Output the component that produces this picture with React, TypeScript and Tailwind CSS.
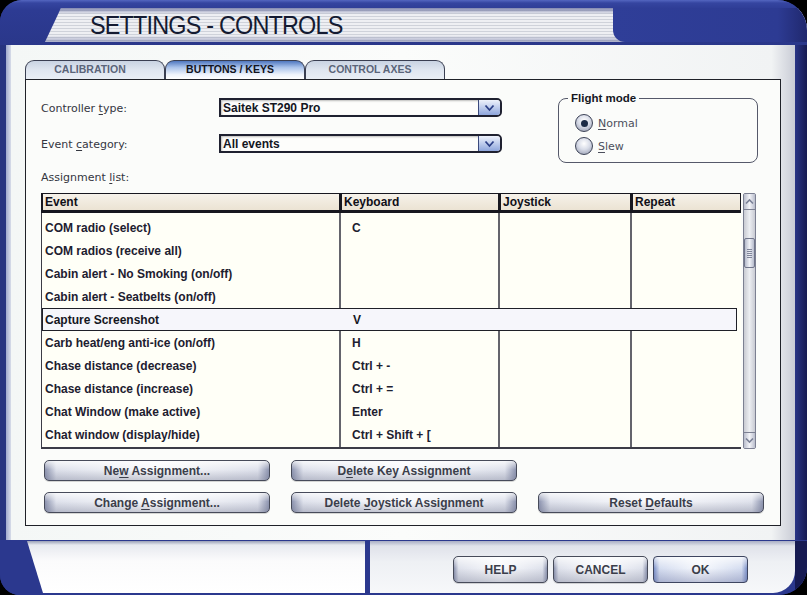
import React from "react";

const rows: [string, string, boolean?][] = [
  ["COM radio (select)", "C"],
  ["COM radios (receive all)", ""],
  ["Cabin alert - No Smoking (on/off)", ""],
  ["Cabin alert - Seatbelts (on/off)", ""],
  ["Capture Screenshot", "V", true],
  ["Carb heat/eng anti-ice (on/off)", "H"],
  ["Chase distance (decrease)", "Ctrl + -"],
  ["Chase distance (increase)", "Ctrl + ="],
  ["Chat Window (make active)", "Enter"],
  ["Chat window (display/hide)", "Ctrl + Shift + ["],
];

const btn =
  "flex items-center justify-center rounded-[5px] border border-[#474b5a] bg-[linear-gradient(180deg,rgba(255,255,255,0.75)_0%,rgba(255,255,255,0)_45%,rgba(110,115,140,0.35)_100%),linear-gradient(90deg,#8e95b0_0%,#dfe2ec_5%,#fafbfd_50%,#dfe2ec_95%,#8e95b0_100%)] font-['Liberation_Sans',Arial,sans-serif] font-bold text-[12px] text-[#3b3e4a] shadow-[0_1px_0_rgba(0,0,0,0.15)]";

function U({ c }: { c: string }) {
  return <span className="underline underline-offset-2">{c}</span>;
}

function Chevron({ up }: { up?: boolean }) {
  return (
    <svg width="9" height="7" viewBox="0 0 9 7">
      <path
        d={up ? "M1 5.5 L4.5 2 L8 5.5" : "M1 1.5 L4.5 5 L8 1.5"}
        fill="none"
        stroke="#7a8096"
        strokeWidth="1.6"
      />
    </svg>
  );
}

function Select({ value }: { value: string }) {
  return (
    <div className="w-[283px] h-[19px] flex border-2 border-[#1f2130] rounded-r-[5px] bg-[#fdfdfb] shadow-[inset_1px_1px_2px_rgba(0,0,0,0.25)]">
      <div className="flex-1 flex items-center pl-[2px] font-['Liberation_Sans',Arial,sans-serif] font-bold text-[12px] text-[#14161f]">
        {value}
      </div>
      <div className="w-[22px] flex items-center justify-center rounded-r-[3px] border-l border-[#3b4a7c] bg-[linear-gradient(180deg,#eef2fb_0%,#c3d0ee_45%,#8ea6dc_100%)]">
        <svg width="11" height="8" viewBox="0 0 11 8">
          <path d="M1.5 1.5 L5.5 6 L9.5 1.5" fill="none" stroke="#2b3f86" strokeWidth="1.8" />
        </svg>
      </div>
    </div>
  );
}

function Radio({ on, label }: { on?: boolean; label: React.ReactNode }) {
  return (
    <div className="flex items-center h-[18px]">
      <div className="w-[18px] h-[18px] rounded-full border border-[#3c4256] bg-[radial-gradient(circle_at_50%_35%,#ffffff_0%,#d8dce8_45%,#8d93a8_100%)] flex items-center justify-center">
        {on && <div className="w-[7px] h-[7px] rounded-full bg-[#1b2a45]" />}
      </div>
      <span className="ml-[5px] pt-[2px] font-['DejaVu_Sans',Verdana,sans-serif] text-[11px] text-[#4c4f5c]">
        {label}
      </span>
    </div>
  );
}

function HeaderCell({ w, label }: { w: string; label: string }) {
  return (
    <div
      className={`${w} h-[20px] flex items-center pl-[2px] border-t border-b-[3px] border-l-2 border-r border-[#17171f] bg-[linear-gradient(180deg,#f6f2ea_0%,#ebe3d3_100%)] font-['Liberation_Sans',Arial,sans-serif] font-bold text-[12px] text-[#101018]`}
    >
      {label}
    </div>
  );
}

function BodyCells({ h, ev, kb }: { h: string; ev?: string; kb?: string }) {
  return (
    <div className={`${h} flex font-['Liberation_Sans',Arial,sans-serif] font-bold text-[12px] text-[#1d2030]`}>
      <div className="w-[299px] border-r-2 border-[#64646c] flex items-center pl-[3px]">{ev}</div>
      <div className="w-[159px] border-r-2 border-[#64646c] flex items-center pl-[11px]">{kb}</div>
      <div className="w-[132px] border-r-2 border-[#64646c]" />
      <div className="flex-1" />
    </div>
  );
}

function Tab({ label, active }: { label: string; active?: boolean }) {
  return (
    <div
      className={`w-[140px] h-[19px] flex items-center justify-center pr-[10px] rounded-t-[9px] border border-b-0 border-[#3a3f52] font-['Liberation_Sans',Arial,sans-serif] font-bold text-[10.5px] ${
        active
          ? "bg-[linear-gradient(180deg,#4f77bf_0%,#a9c2ea_35%,#eef3fb_75%,#ffffff_100%)] text-[#111320]"
          : "bg-[linear-gradient(180deg,#c9d3e2_0%,#dfe6f0_50%,#e9eef5_100%)] text-[#5a6479]"
      }`}
    >
      {label}
    </div>
  );
}

const label = "pt-[3px] font-['DejaVu_Sans',Verdana,sans-serif] text-[11px] text-[#34363f]";

export default function App() {
  return (
    <div className="w-[807px] h-[595px] bg-black overflow-hidden">
      <div className="w-full h-full flex flex-col overflow-hidden rounded-tl-[22px] rounded-tr-[30px] rounded-bl-[20px] rounded-br-[28px] bg-[#2d3b93]">
        {/* header */}
        <div className="h-[45px] flex pt-[8px] pb-[3px] bg-[linear-gradient(180deg,#5466c0_0px,#3545a0_3px,#2d3b93_10px,#2a378a_100%)]">
          <div className="w-[45px]" />
          <div className="flex-1 flex [clip-path:polygon(16px_0,100%_0,100%_100%,0_100%)] bg-[linear-gradient(180deg,rgba(40,50,120,0.55)_0px,rgba(40,50,120,0)_6px,rgba(255,255,255,0)_80%,rgba(40,50,120,0.35)_100%),repeating-linear-gradient(180deg,#eeeff3_0px,#eeeff3_2px,#cfd2da_2px,#cfd2da_3px)]">
            <div className="w-[568px] flex items-center pl-[45px]">
              <span className="font-['Liberation_Sans',Arial,sans-serif] text-[26px] leading-none text-[#141a31] tracking-[-0.9px] scale-x-90 origin-left whitespace-nowrap">
                SETTINGS - CONTROLS
              </span>
            </div>
            <div className="flex-1 rounded-bl-[12px] bg-[linear-gradient(90deg,#2f3e98_0%,#2d3b93_85%,#20286e_100%)]" />
          </div>
        </div>

        {/* middle */}
        <div className="flex-1 flex">
          <div className="w-[6px] bg-[#27347f]" />
          <div className="w-[5px] bg-[linear-gradient(90deg,#9fa9cc,#d8dde9)]" />
          <div className="w-[784px] flex flex-col pt-[15px] pl-[14px] pr-[14px] pb-[14px] bg-[linear-gradient(90deg,#f4f7f6_0%,#fbfcfb_50%,#f1f3f4_97%,#c9ccd6_100%)]">
            <div className="flex h-[19px]">
              <Tab label="CALIBRATION" />
              <Tab label="BUTTONS / KEYS" active />
              <Tab label="CONTROL AXES" />
            </div>
            <div className="flex-1 border border-[#1f2128] bg-[#fbfcfa] flex flex-col pl-[15px]">
              {/* top controls */}
              <div className="flex items-start h-[73px]">
                <div className="flex flex-col pt-[18px]">
                  <div className="flex items-center h-[19px]">
                    <span className={`w-[178px] ${label}`}>
                      Controller <U c="t" />ype:
                    </span>
                    <Select value="Saitek ST290 Pro" />
                  </div>
                  <div className="flex items-center h-[19px] mt-[17px]">
                    <span className={`w-[178px] ${label}`}>
                      Event <U c="c" />ategory:
                    </span>
                    <Select value="All events" />
                  </div>
                </div>
                <fieldset className="shrink-0 ml-[56px] mt-[12px] w-[200px] h-[71px] border border-[#55596a] rounded-[8px]">
                  <legend className="ml-[9px] px-[3px] font-['Liberation_Sans',Arial,sans-serif] font-bold text-[11.5px] text-[#15171f] leading-[13px]">
                    Flight mode
                  </legend>
                  <div className="flex flex-col pl-[16px] pt-[9px] gap-[5px]">
                    <Radio on label={<><U c="N" />ormal</>} />
                    <Radio label={<><U c="S" />lew</>} />
                  </div>
                </fieldset>
              </div>

              <div className="mt-[16px] h-[15px] flex items-center">
                <span className={label}>
                  Assignment <U c="l" />ist:
                </span>
              </div>

              {/* table */}
              <div className="mt-[9px] flex h-[256px]">
                <div className="w-[700px] flex flex-col">
                  <div className="flex">
                    <HeaderCell w="w-[299px]" label="Event" />
                    <HeaderCell w="w-[159px]" label="Keyboard" />
                    <HeaderCell w="w-[132px]" label="Joystick" />
                    <HeaderCell w="w-[110px]" label="Repeat" />
                  </div>
                  <div className="flex-1 flex flex-col border-l border-b-2 border-[#3c3c46] bg-[#fffff7]">
                    <BodyCells h="h-[3px]" />
                    {rows.map(([ev, kb, sel]) =>
                      sel ? (
                        <div
                          key={ev}
                          className="h-[23px] mr-[4px] flex items-center border border-[#1f2028] bg-[#f6f6fb] font-['Liberation_Sans',Arial,sans-serif] font-bold text-[12px] text-[#15171f]"
                        >
                          <span className="w-[299px] pl-[2px]">{ev}</span>
                          <span className="pl-[11px]">{kb}</span>
                        </div>
                      ) : (
                        <BodyCells key={ev} h="h-[23px]" ev={ev} kb={kb} />
                      )
                    )}
                    <BodyCells h="flex-1" />
                  </div>
                </div>
                {/* scrollbar */}
                <div className="ml-[2px] w-[13px] flex flex-col border border-[#7c8092] rounded-[2px] bg-[linear-gradient(90deg,#c9cbd3_0%,#eceef2_50%,#c9cbd3_100%)]">
                  <div className="h-[16px] flex items-center justify-center border-b border-[#7c8092] bg-[linear-gradient(90deg,#b9bdcc,#f3f4f8_50%,#b9bdcc)]">
                    <Chevron up />
                  </div>
                  <div className="flex-1">
                    <div className="mt-[28px] h-[30px] border border-[#70758a] rounded-[2px] bg-[linear-gradient(90deg,#b6bbcc,#f0f2f7_50%,#b6bbcc)] flex flex-col items-center justify-center gap-[1px]">
                      <div className="w-[5px] h-px bg-[#80859a]" />
                      <div className="w-[5px] h-px bg-[#80859a]" />
                      <div className="w-[5px] h-px bg-[#80859a]" />
                      <div className="w-[5px] h-px bg-[#80859a]" />
                      <div className="w-[5px] h-px bg-[#80859a]" />
                    </div>
                  </div>
                  <div className="h-[16px] flex items-center justify-center border-t border-[#7c8092] bg-[linear-gradient(90deg,#b9bdcc,#f3f4f8_50%,#b9bdcc)]">
                    <Chevron />
                  </div>
                </div>
              </div>

              {/* buttons */}
              <div className="ml-[3px] mt-[11px] grid grid-cols-[226px_226px_226px] gap-x-[21px] gap-y-[11px]">
                <div className={`${btn} h-[21px]`}>
                  <span>
                    Ne<U c="w" /> Assignment...
                  </span>
                </div>
                <div className={`${btn} h-[21px]`}>
                  <span>
                    D<U c="e" />lete Key Assignment
                  </span>
                </div>
                <div />
                <div className={`${btn} h-[21px]`}>
                  <span>
                    Change <U c="A" />ssignment...
                  </span>
                </div>
                <div className={`${btn} h-[21px]`}>
                  <span>
                    Delete <U c="J" />oystick Assignment
                  </span>
                </div>
                <div className={`${btn} h-[21px]`}>
                  <span>
                    Reset <U c="D" />efaults
                  </span>
                </div>
              </div>
            </div>
          </div>
          <div className="w-[12px] bg-[linear-gradient(90deg,#2a3586,#161a52)]" />
        </div>

        {/* bottom */}
        <div className="h-[55px] flex pt-[1px] pb-[2px] bg-[#2b388e]">
          <div className="w-[27px]" />
          <div className="w-[338px] [clip-path:polygon(0_0,100%_0,100%_100%,16px_100%)] bg-[linear-gradient(180deg,#9aa0b6_0px,#e7e9ef_4px,#fbfbfc_20px,#ffffff_100%)]" />
          <div className="w-[5px]" />
          <div className="w-[425px] rounded-br-[22px] flex items-start pt-[15px] pl-[83px] gap-[5px] bg-[linear-gradient(180deg,#a9aec4_0px,#e0e2ea_5px,#eef0f4_40%,#f7f8fa_100%)]">
            <div className={`${btn} w-[95px] h-[27px] rounded-[4px]`}>HELP</div>
            <div className={`${btn} w-[95px] h-[27px] rounded-[4px]`}>CANCEL</div>
            <div
              className={`w-[95px] h-[27px] flex items-center justify-center rounded-[4px] border border-[#3e4560] bg-[linear-gradient(180deg,rgba(255,255,255,0.75)_0%,rgba(255,255,255,0)_45%,rgba(90,100,150,0.35)_100%),linear-gradient(90deg,#7f93c9_0%,#d5ddf0_6%,#f7f9fd_50%,#d5ddf0_94%,#7f93c9_100%)] font-['Liberation_Sans',Arial,sans-serif] font-bold text-[12px] text-[#3b3e4a]`}
            >
              OK
            </div>
          </div>
          <div className="w-[12px] bg-[#161a52]" />
        </div>
      </div>
    </div>
  );
}
